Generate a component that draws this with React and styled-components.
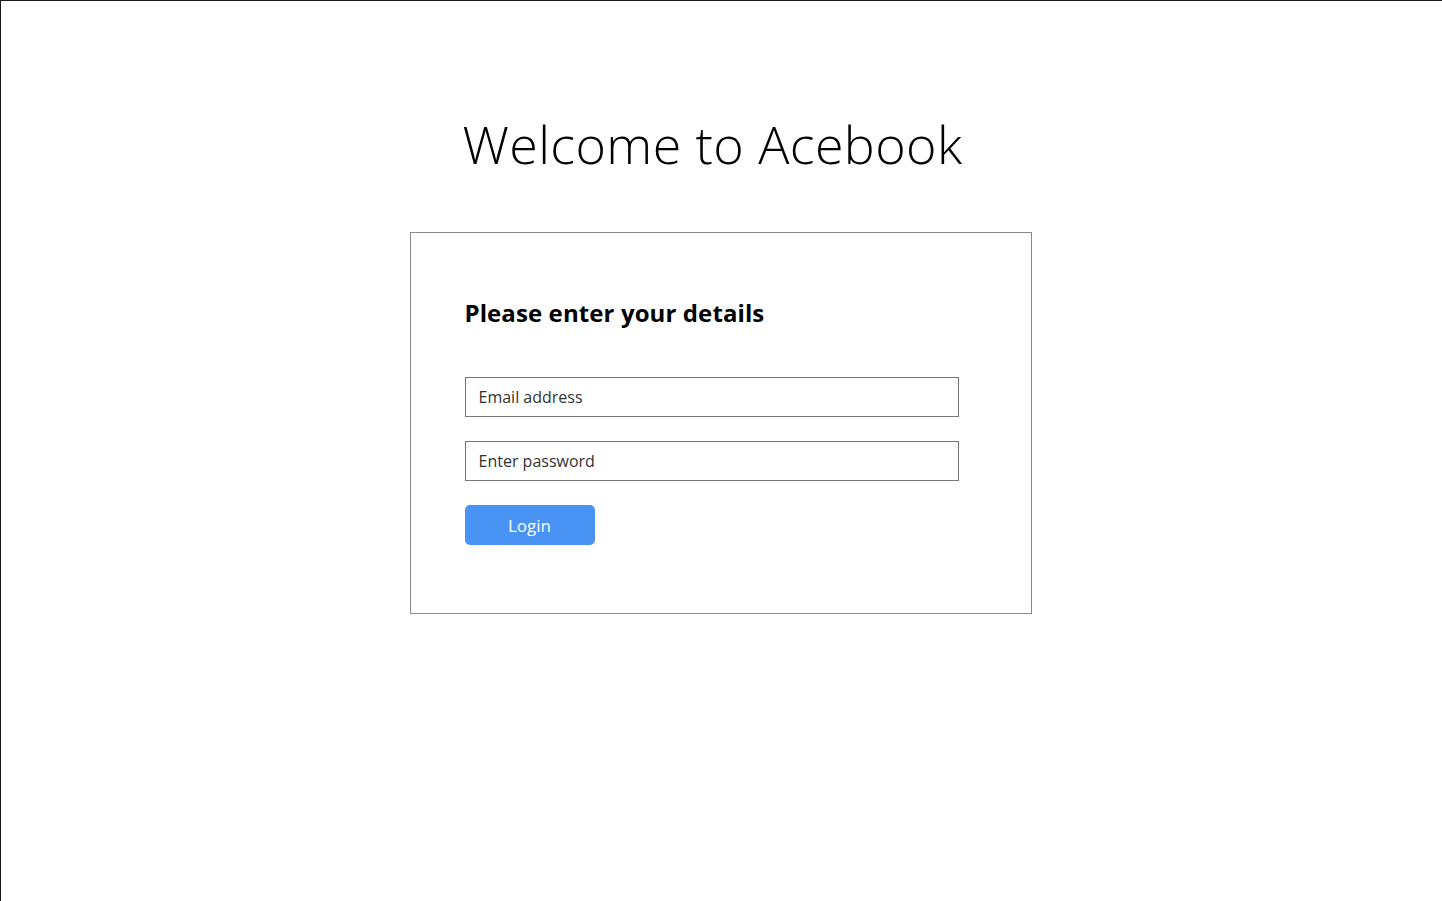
import React from "react";
import styled, { createGlobalStyle } from "styled-components";

const GlobalStyle = createGlobalStyle`
  * { box-sizing: border-box; }
  body {
    margin: 0;
    background: #fff;
    font-family: "Open Sans", "Liberation Sans", sans-serif;
  }
`;

const Page = styled.div`
  height: 901px;
  border-top: 1px solid #1a1a1a;
  border-left: 1px solid #1a1a1a;
  display: flex;
  flex-direction: column;
  align-items: center;
`;

const Title = styled.h1`
  margin: 108px 18px 53px 0;
  font-size: 52px;
  font-weight: 300;
  line-height: 70px;
  color: #000;
  letter-spacing: 0.4px;
`;

const Card = styled.div`
  width: 622px;
  margin-right: 2px;
  border: 1px solid #8a8a8a;
  padding: 63px 54px 68px;
`;

const Heading = styled.h2`
  margin: 0 0 47px;
  font-size: 24px;
  font-weight: 700;
  line-height: 34px;
  color: #000;
  letter-spacing: 0.1px;
`;

const Form = styled.form`
  display: flex;
  flex-direction: column;
  align-items: flex-start;
  gap: 24px;
`;

const Input = styled.input`
  width: 494px;
  height: 40px;
  border: 1px solid #777;
  padding: 0 13px;
  font-family: inherit;
  font-size: 16px;
  color: #222;
  outline: none;
  &::placeholder {
    color: #333;
  }
`;

const Button = styled.button`
  width: 130px;
  height: 40px;
  border: none;
  border-radius: 5px;
  background: #4893f4;
  color: #fff;
  font-family: inherit;
  font-size: 17px;
  cursor: pointer;
`;

export default function App() {
  return (
    <>
      <GlobalStyle />
      <Page>
        <Title>Welcome to Acebook</Title>
        <Card>
          <Heading>Please enter your details</Heading>
          <Form onSubmit={(e) => e.preventDefault()}>
            <Input type="email" placeholder="Email address" />
            <Input type="password" placeholder="Enter password" />
            <Button type="submit">Login</Button>
          </Form>
        </Card>
      </Page>
    </>
  );
}
